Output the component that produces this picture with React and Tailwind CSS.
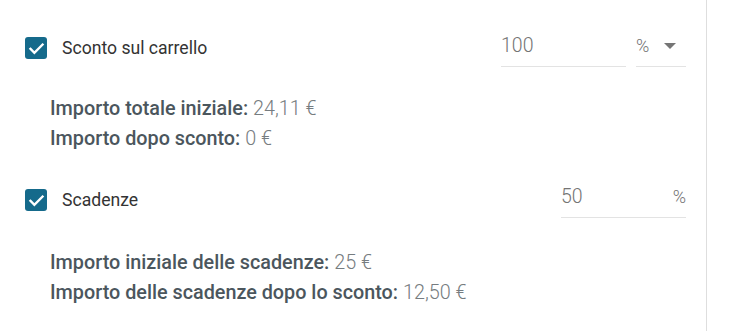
import React from 'react';

function Check() {
  return (
    <span className="flex h-[22px] w-[22px] shrink-0 items-center justify-center rounded-[3px] bg-[#156a8b]">
      <svg width="17" height="17" viewBox="0 0 24 24" fill="none">
        <path d="M3.5 12.5l5.5 5.5L20.5 6.5" stroke="#fff" strokeWidth="3.4" strokeLinecap="square" />
      </svg>
    </span>
  );
}

function Summary({ rows }) {
  return (
    <div className="mt-[2px] flex flex-col pl-[50px] text-[19.8px] leading-[30px] text-[#4b565d]">
      {rows.map(([label, value]) => (
        <div key={label}>
          <span className="font-medium">{label}</span>{' '}
          <span className="font-light text-[#767c80]">{value}</span>
        </div>
      ))}
    </div>
  );
}

export default function App() {
  return (
    <div className="h-[331px] w-[707px] overflow-hidden border-r border-[#dedede] bg-white font-['Roboto',sans-serif]">
      <div className="flex h-[92px] items-center pl-[25px] pr-[20px] pt-[4px]">
        <Check />
        <span className="ml-[15px] text-[17.6px] text-[#333]">Sconto sul carrello</span>
        <div className="ml-auto mt-[6px] flex items-end gap-[10px]">
          <div className="w-[125px] border-b border-[#e3e3e3] pb-[9px] text-[19.5px] leading-[22px] font-light text-[#747474]">100</div>
          <div className="flex w-[50px] items-center justify-between border-b border-[#e3e3e3] pb-[9px] text-[18px] leading-[22px] font-light text-[#747474]">
            <span>%</span>
            <svg width="12" height="6" viewBox="0 0 12 6" className="mr-[10px]"><path d="M0 0h12L6 6z" fill="#757575" /></svg>
          </div>
        </div>
      </div>
      <Summary rows={[['Importo totale iniziale:', '24,11 €'], ['Importo dopo sconto:', '0 €']]} />
      <div className="flex h-[92px] items-center pl-[25px] pr-[20px]">
        <Check />
        <span className="ml-[15px] text-[17.6px] text-[#333]">Scadenze</span>
        <div className="ml-auto mt-[4px] flex w-[125px] items-end justify-between border-b border-[#e3e3e3] pb-[9px] leading-[22px] font-light text-[#747474]">
          <span className="text-[19.5px]">50</span>
          <span className="text-[18px]">%</span>
        </div>
      </div>
      <Summary rows={[['Importo iniziale delle scadenze:', '25 €'], ['Importo delle scadenze dopo lo sconto:', '12,50 €']]} />
      <div className="pl-[8px] pt-[27px] text-[17.6px] leading-[24px] text-[#333]">Modalità</div>
    </div>
  );
}
